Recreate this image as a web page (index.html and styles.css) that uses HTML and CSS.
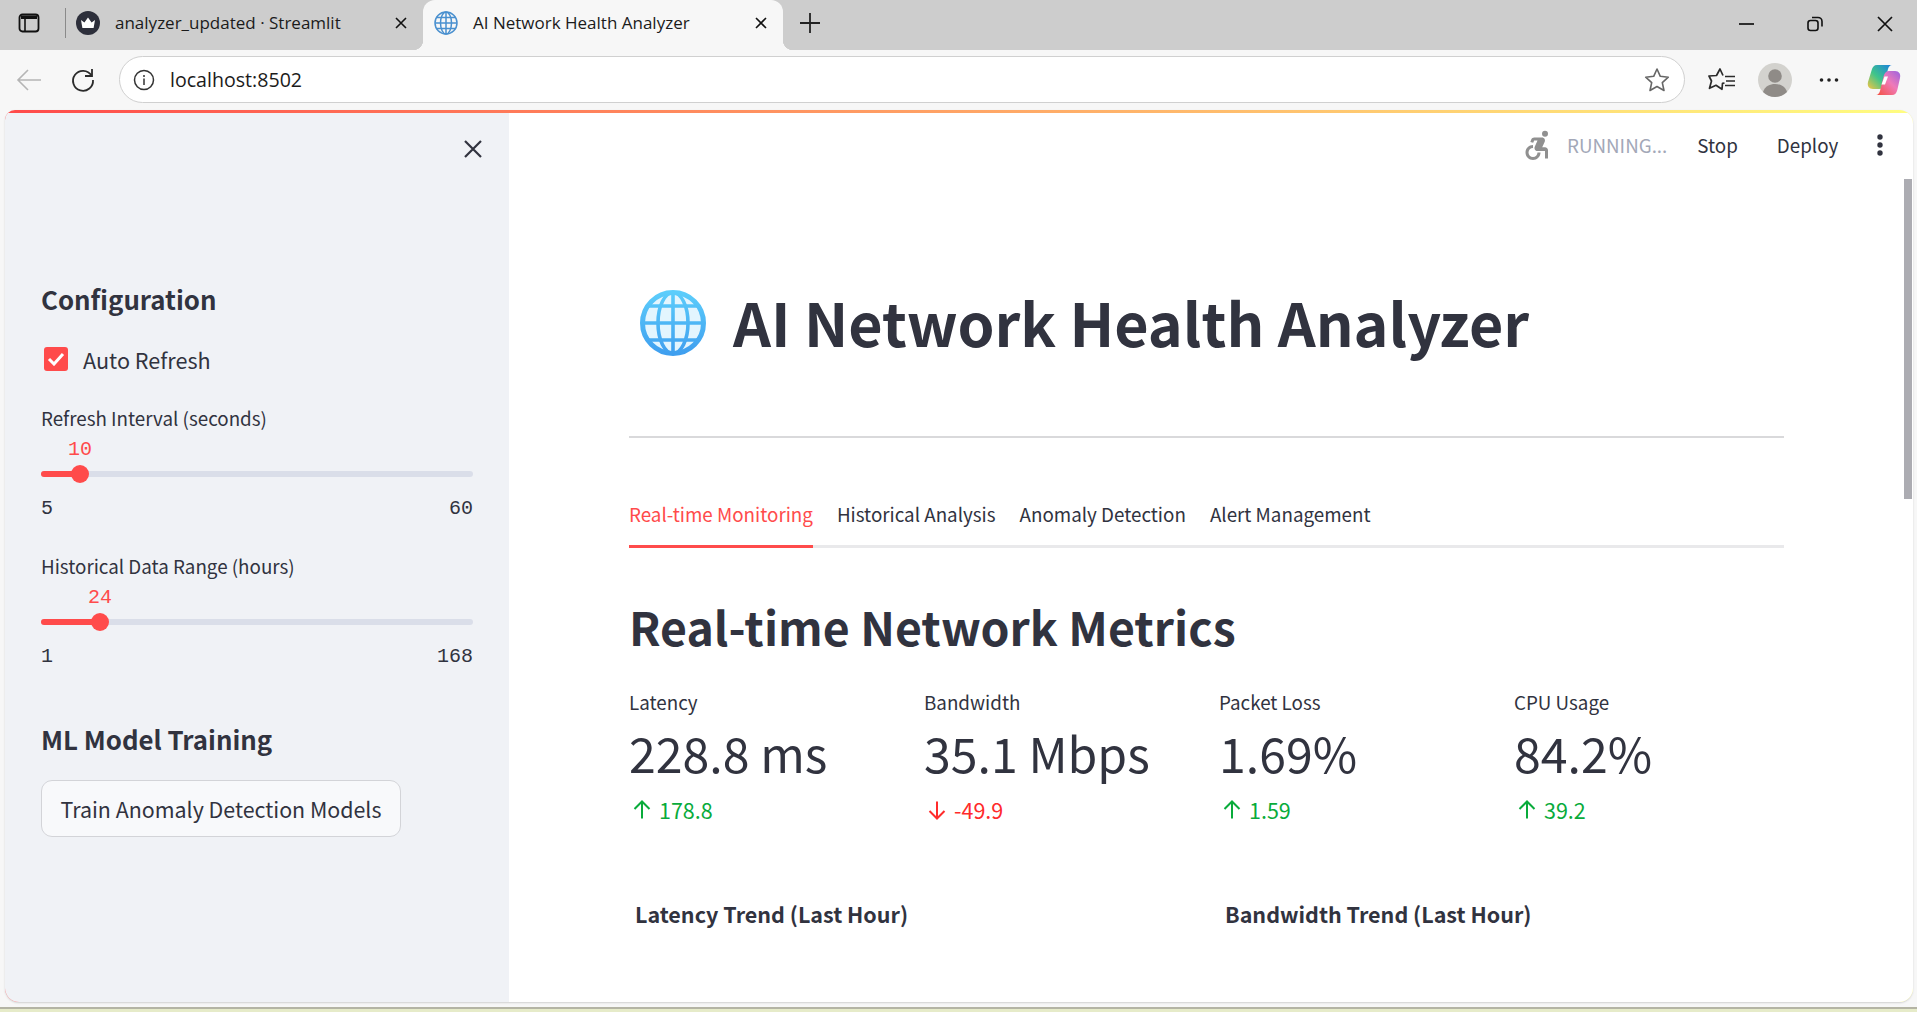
FILE: index.html
```html
<!DOCTYPE html>
<html>
<head>
    <meta charset="UTF-8">
    <title>AI Network Health Analyzer</title>
    <link rel="stylesheet" href="styles.css">
</head>
<body>
    <div class="tabbar">
        <svg class="tb-panel" width="22" height="22" viewBox="0 0 22 22"><rect x="1.5" y="2.5" width="19" height="17" rx="3" fill="none" stroke="#111" stroke-width="1.8"/><path d="M3 3.5h16V7H3z" fill="#111"/><path d="M7 7v12" stroke="#111" stroke-width="1.6"/></svg>
        <div class="tb-sep"></div>
        <div class="tab">
            <svg class="tab-icon" width="24" height="24" viewBox="0 0 24 24"><circle cx="12" cy="12" r="12" fill="#2d2f3b"/><path d="M5 9l3.4 2.6L12 6.5l3.6 5.1L19 9l-1.4 8H6.400z" fill="#fff"/></svg>
            <span class="tab-title">analyzer_updated · Streamlit</span>
            <svg class="tab-x" width="14" height="14" viewBox="0 0 14 14"><path d="M2 2l10 10M12 2L2 12" stroke="#111" stroke-width="1.6"/></svg>
        </div>
        <div class="tab tab-active">
            <svg class="tab-icon" width="24" height="24" viewBox="0 0 24 24" fill="none" stroke="#4a90cf" stroke-width="1.5"><circle cx="12" cy="12" r="11"/><ellipse cx="12" cy="12" rx="5.500" ry="11"/><path d="M12 1v22M1 12h22M2.500 6.500h19M2.500 17.500h19"/></svg>
            <span class="tab-title">AI Network Health Analyzer</span>
            <svg class="tab-x" width="14" height="14" viewBox="0 0 14 14"><path d="M2 2l10 10M12 2L2 12" stroke="#111" stroke-width="1.6"/></svg>
        </div>
        <svg class="tb-plus" width="22" height="22" viewBox="0 0 22 22"><path d="M11 1v20M1 11h20" stroke="#222" stroke-width="1.8"/></svg>
        <div class="win-btns">
            <svg width="16" height="16" viewBox="0 0 16 16"><path d="M0 8h15" stroke="#111" stroke-width="1.7"/></svg>
            <svg class="win-restore" width="16" height="16" viewBox="0 0 16 16" fill="none" stroke="#111" stroke-width="1.6"><rect x="1" y="4.500" width="10" height="10" rx="2.500"/><path d="M5 1.500h6a4 4 0 0 1 4 4v5"/></svg>
            <svg width="16" height="16" viewBox="0 0 16 16"><path d="M1 1l14 14M15 1L1 15" stroke="#111" stroke-width="1.7"/></svg>
        </div>
    </div>

    <div class="toolbar">
        <svg class="tl-back" width="26" height="24" viewBox="0 0 26 24" fill="none" stroke="#b5b5b5" stroke-width="1.6"><path d="M25 12H2M12 2L2 12l10 10"/></svg>
        <svg class="tl-reload" width="26" height="26" viewBox="0 0 26 26" fill="none" stroke="#2b2b2b" stroke-width="1.8"><path d="M21.500 8.500A10 10 0 1 0 23 13"/><path d="M22 2v7h-7"/></svg>
        <div class="addr">
            <svg width="22" height="22" viewBox="0 0 22 22" fill="none" stroke="#333" stroke-width="1.5"><circle cx="11" cy="11" r="9.500"/><path d="M11 9.500v6.500M11 6v2"/></svg>
            <span class="addr-text">localhost:8502</span>
            <svg class="addr-star" width="26" height="26" viewBox="0 0 26 26" fill="none" stroke="#666" stroke-width="1.6" stroke-linejoin="round"><path d="M13 2l3.300 7.300 8 .9-6 5.400 1.700 7.900-7-4-7 4 1.700-7.900-6-5.400 8-.9z"/></svg>
        </div>
        <svg class="tl-fav" width="28" height="26" viewBox="0 0 28 26" fill="none" stroke="#2b2b2b" stroke-width="1.7" stroke-linejoin="round"><path d="M16.500 16l-2 .3-.5 6-6-4-6.500 3 2-7.300L1 9l7.500-.5L12 2l3 6.500"/><path d="M17 9.500h10M18 14h9M17 18.500h10" stroke-width="1.500"/></svg>
        <svg class="tl-avatar" width="34" height="34" viewBox="0 0 34 34"><circle cx="17" cy="17" r="17" fill="#d3d2ce"/><circle cx="17" cy="13" r="6.800" fill="#8f8b87"/><path d="M5 29c2-6 7-8 12-8s10 2 12 8a17 17 0 0 1-24 0z" fill="#8f8b87"/></svg>
        <svg class="tl-dots" width="20" height="6" viewBox="0 0 20 6"><circle cx="2.500" cy="3" r="1.800" fill="#222"/><circle cx="10" cy="3" r="1.800" fill="#222"/><circle cx="17.500" cy="3" r="1.800" fill="#222"/></svg>
        <svg class="tl-copilot" width="34" height="32" viewBox="0 0 34 32">
            <defs>
                <linearGradient id="cpA" x1="0" y1="1" x2="1" y2="0"><stop offset="0" stop-color="#f5c542"/><stop offset=".45" stop-color="#3fc58a"/><stop offset="1" stop-color="#1a7fe0"/></linearGradient>
                <linearGradient id="cpB" x1="0" y1="1" x2="1" y2="0"><stop offset="0" stop-color="#f4503e"/><stop offset=".55" stop-color="#f07ab8"/><stop offset="1" stop-color="#9a63e0"/></linearGradient>
            </defs>
            <path d="M10 1C7 1 5.500 3 4.700 6L1 18c-1 4 1 7 5 7h6c3 0 4.500-2 5.300-5L21 5c.6-2 2-4 4-4z" fill="url(#cpA)"/>
            <path d="M25 31c3 0 4.500-2 5.300-5L33 14c1-4-1-7-5-7h-6c-3 0-4.500 2-5.300 5L13 27c-.6 2-2 4-4 4z" fill="url(#cpB)"/>
            <path d="M17.500 12.500h3.500l-3 8h-3.500z" fill="#fff"/>
        </svg>
    </div>

    <div class="window">
        <aside class="sidebar">
            <svg class="side-close" width="20" height="20" viewBox="0 0 20 20"><path d="M2 2l16 16M18 2L2 18" stroke="#31333f" stroke-width="2.200"/></svg>
            <h3 class="side-head side-head-first">Configuration</h3>
            <label class="check">
                <span class="check-box"><svg width="18" height="14" viewBox="0 0 18 14"><path d="M2 7l5 5 9-10" fill="none" stroke="#fff" stroke-width="3"/></svg></span>
                Auto Refresh
            </label>
            <div class="field">
                <div class="field-label">Refresh Interval (seconds)</div>
                <div class="slider"><div class="slider-fill" style="width:39px"><span class="slider-val">10</span><span class="slider-thumb"></span></div></div>
                <div class="ticks"><span>5</span><span>60</span></div>
            </div>
            <div class="field">
                <div class="field-label">Historical Data Range (hours)</div>
                <div class="slider"><div class="slider-fill" style="width:59px"><span class="slider-val">24</span><span class="slider-thumb"></span></div></div>
                <div class="ticks"><span>1</span><span>168</span></div>
            </div>
            <h3 class="side-head side-head-ml">ML Model Training</h3>
            <button class="btn">Train Anomaly Detection Models</button>
        </aside>

        <main class="main">
            <header class="st-header">
                <svg class="run-icon" width="36" height="36" viewBox="0 0 24 24" fill="#909090"><circle cx="18" cy="4.540" r="2"/><path d="M15 17h-2c0 1.650-1.350 3-3 3s-3-1.350-3-3 1.350-3 3-3v-2c-2.760 0-5 2.240-5 5s2.240 5 5 5 5-2.240 5-5zm3-3.500h-1.860l1.670-3.670C18.420 8.500 17.440 7 15.960 7h-5.200c-.81 0-1.540.47-1.870 1.200L8.220 10l1.920.53.65-1.530H13l-1.830 4.100c-.6 1.330.39 2.900 1.850 2.900H18v5h2v-5.500c0-1.100-.9-2-2-2z"/></svg>
                <span class="run-text">RUNNING...</span>
                <span class="hdr-btn hdr-stop">Stop</span>
                <span class="hdr-btn hdr-deploy">Deploy</span>
                <svg class="hdr-more" width="6" height="22" viewBox="0 0 6 22"><circle cx="3" cy="3" r="2.700" fill="#31333f"/><circle cx="3" cy="11" r="2.700" fill="#31333f"/><circle cx="3" cy="19" r="2.700" fill="#31333f"/></svg>
            </header>
            <div class="scroll-thumb"></div>

            <div class="content">
                <h1 class="title">
                    <svg class="title-globe" width="66" height="66" viewBox="0 0 66 66" fill="none">
                        <defs><linearGradient id="gl" x1="0" y1="0" x2="0" y2="1"><stop offset="0" stop-color="#5ccdfb"/><stop offset="1" stop-color="#3f9fef"/></linearGradient></defs>
                        <circle cx="33" cy="33" r="32" fill="#e3f5fe"/>
                        <g stroke="url(#gl)" stroke-width="3.600">
                            <ellipse cx="33" cy="33" rx="15" ry="30.500"/>
                            <path d="M33 2v62M2 33h62M8 16h50M8 50h50"/>
                        </g>
                        <circle cx="33" cy="33" r="30.500" stroke="url(#gl)" stroke-width="5"/>
                    </svg>
                    AI Network Health Analyzer
                </h1>
                <hr class="rule">
                <nav class="tabs">
                    <span class="st-tab st-tab-on">Real-time Monitoring</span>
                    <span class="st-tab">Historical Analysis</span>
                    <span class="st-tab">Anomaly Detection</span>
                    <span class="st-tab">Alert Management</span>
                </nav>
                <h2 class="section">Real-time Network Metrics</h2>
                <div class="metrics">
                    <div class="metric">
                        <div class="metric-label">Latency</div>
                        <div class="metric-value">228.8 ms</div>
                        <div class="delta delta-up"><svg width="24" height="24" viewBox="0 0 24 24"><path d="M12 20.500V3.500M4.500 11L12 3.500l7.500 7.500" fill="none" stroke="currentColor" stroke-width="2"/></svg>178.8</div>
                    </div>
                    <div class="metric">
                        <div class="metric-label">Bandwidth</div>
                        <div class="metric-value">35.1 Mbps</div>
                        <div class="delta delta-down"><svg width="24" height="24" viewBox="0 0 24 24"><path d="M12 3.500v17M4.500 13l7.500 7.500 7.500-7.500" fill="none" stroke="currentColor" stroke-width="2"/></svg>-49.9</div>
                    </div>
                    <div class="metric">
                        <div class="metric-label">Packet Loss</div>
                        <div class="metric-value">1.69%</div>
                        <div class="delta delta-up"><svg width="24" height="24" viewBox="0 0 24 24"><path d="M12 20.500V3.500M4.500 11L12 3.500l7.500 7.500" fill="none" stroke="currentColor" stroke-width="2"/></svg>1.59</div>
                    </div>
                    <div class="metric">
                        <div class="metric-label">CPU Usage</div>
                        <div class="metric-value">84.2%</div>
                        <div class="delta delta-up"><svg width="24" height="24" viewBox="0 0 24 24"><path d="M12 20.500V3.500M4.500 11L12 3.500l7.500 7.500" fill="none" stroke="currentColor" stroke-width="2"/></svg>39.2</div>
                    </div>
                </div>
                <div class="trends">
                    <div class="trend">Latency Trend (Last Hour)</div>
                    <div class="trend">Bandwidth Trend (Last Hour)</div>
                </div>
            </div>
        </main>
    </div>
    <div class="taskbar-edge"></div>
</body>
</html>
```

FILE: styles.css
```css
* {
    box-sizing: border-box;
    margin: 0;
    padding: 0;
}

html,
body {
    height: 100%;
    overflow: hidden;
}

body {
    display: flex;
    flex-direction: column;
    background-color: #f7f7f7;
    color: #31333f;
    font-family: "Noto Sans CJK SC", "Noto Sans", sans-serif;
}

/* browser tab strip */
.tabbar {
    display: flex;
    align-items: center;
    flex: none;
    position: relative;
    height: 50px;
    background-color: #cdcdcd;
    font-family: "Open Sans", "Noto Sans", sans-serif;
    font-size: 17px;
    color: #1b1b1b;
}

.tb-panel {
    margin-left: 18px;
    margin-bottom: 5px;
}

.tb-sep {
    width: 1px;
    height: 30px;
    margin-left: 25px;
    margin-bottom: 5px;
    background-color: #8a8a8a;
}

.tab {
    display: flex;
    align-items: center;
    width: 357px;
    height: 50px;
    padding-left: 10px;
    padding-right: 15px;
    padding-bottom: 5px;
}

.tab-active {
    position: relative;
    width: 360px;
    padding-left: 11px;
    background-color: #f7f7f7;
    border-radius: 12px 12px 0 0;
}

/* flared foot of the active tab */
.tab-active::before,
.tab-active::after {
    content: "";
    position: absolute;
    bottom: 0;
    width: 10px;
    height: 10px;
}

.tab-active::before {
    left: -10px;
    background: radial-gradient(circle at 0 0, #cdcdcd 10px, #f7f7f7 10.500px);
}

.tab-active::after {
    right: -10px;
    background: radial-gradient(circle at 100% 0, #cdcdcd 10px, #f7f7f7 10.500px);
}

.tab-icon {
    flex: none;
}

.tab-title {
    flex: 1;
    margin-left: 15px;
    white-space: nowrap;
}

.tb-plus {
    margin-left: 16px;
    margin-bottom: 5px;
}

.win-btns {
    display: flex;
    align-items: center;
    gap: 53px;
    margin-left: auto;
    margin-right: 24px;
    margin-bottom: 3px;
}

.win-restore {
    margin-left: -1px;
    margin-right: 1px;
}

/* address bar row */
.toolbar {
    display: flex;
    align-items: center;
    flex: none;
    height: 60px;
    padding-bottom: 1px;
    background-color: #f7f7f7;
}

.tl-back {
    margin-left: 16px;
}

.tl-reload {
    margin-left: 28px;
}

.addr {
    display: flex;
    align-items: center;
    width: 1566px;
    height: 47px;
    margin-left: 23px;
    padding: 0 14px 0 13px;
    background-color: #fff;
    border: 1.5px solid #d0d0d0;
    border-radius: 24px;
}

.addr-text {
    flex: 1;
    margin-left: 15px;
    font-family: "Open Sans", "Noto Sans", sans-serif;
    font-size: 19.600px;
    color: #1b1b1b;
}

.tl-fav {
    margin-left: 23px;
}

.tl-avatar {
    margin-left: 22px;
}

.tl-dots {
    margin-left: 27px;
}

.tl-copilot {
    margin-left: 28px;
}

/* page area */
.window {
    display: flex;
    flex: 1;
    min-height: 0;
    margin: 0 4px 5px 5px;
    padding-top: 3px;
    background: linear-gradient(90deg, #ff4b4b, #fffd80);
    border-radius: 10px 14px 14px 14px;
    box-shadow: 0 1px 2px #d0d0d0;
    overflow: hidden;
}

.taskbar-edge {
    flex: none;
    height: 5px;
    background: linear-gradient(#b4b4a4 0, #b4b4a4 2px, #e6ebc9 2px);
}

.sidebar {
    position: relative;
    flex: none;
    width: 504px;
    padding: 0 36px;
    background-color: #f0f2f6;
}

.side-close {
    position: absolute;
    top: 26px;
    left: 458px;
}

.side-head {
    font-size: 25.800px;
    font-weight: 600;
    line-height: 38px;
}

.side-head-first {
    margin-top: 167px;
}

.side-head-ml {
    margin-top: 51px;
}

.check {
    display: flex;
    align-items: center;
    gap: 15px;
    height: 30px;
    margin-top: 26px;
    margin-left: 3px;
    font-size: 21.600px;
}

.check-box {
    display: flex;
    align-items: center;
    justify-content: center;
    width: 24px;
    height: 24px;
    background-color: #ff4b4b;
    border-radius: 3px;
}

.field {
    margin-top: 32px;
}

.check + .field {
    margin-top: 31px;
}

.field-label {
    font-size: 18.800px;
    line-height: 26px;
}

.slider {
    position: relative;
    height: 6px;
    margin-top: 40px;
    background-color: #dadee9;
    border-radius: 3px;
}

.slider-fill {
    position: relative;
    height: 6px;
    background-color: #ff4b4b;
    border-radius: 3px;
}

.slider-thumb {
    position: absolute;
    top: -6px;
    right: -9px;
    width: 18px;
    height: 18px;
    background-color: #ff4b4b;
    border-radius: 50%;
}

.slider-val {
    position: absolute;
    top: -33px;
    right: -20px;
    width: 40px;
    font-family: "Liberation Mono", monospace;
    font-size: 20px;
    line-height: 24px;
    text-align: center;
    color: #ff4b4b;
}

.ticks {
    display: flex;
    justify-content: space-between;
    margin-top: 20px;
    font-family: "Liberation Mono", monospace;
    font-size: 20px;
    line-height: 24px;
}

.btn {
    display: block;
    width: 360px;
    height: 57px;
    margin-top: 22px;
    background-color: #f8f9fb;
    border: 1.5px solid #d3d4d8;
    border-radius: 11px;
    color: #31333f;
    font-family: inherit;
    font-size: 21.400px;
}

.main {
    position: relative;
    flex: 1;
    min-width: 0;
    background-color: #fff;
}

.st-header {
    display: flex;
    align-items: center;
    height: 63px;
}

.run-icon {
    margin-left: 1009px;
}

.run-text {
    margin-left: 13px;
    font-size: 18.800px;
    color: #a3a8b8;
}

.hdr-btn {
    font-size: 18.800px;
}

.hdr-stop {
    margin-left: 30px;
}

.hdr-deploy {
    margin-left: 39px;
}

.hdr-more {
    margin-left: 39px;
}

.scroll-thumb {
    position: absolute;
    top: 66px;
    right: 1px;
    width: 8px;
    height: 320px;
    background-color: #acacb2;
}

.content {
    width: 1395px;
    padding: 0 120px;
}

.title {
    display: flex;
    align-items: center;
    height: 86px;
    margin-top: 102px;
    padding-left: 11px;
    font-size: 59.200px;
    font-weight: 700;
    line-height: 86px;
    white-space: nowrap;
}

.title-globe {
    flex: none;
    margin-top: 4px;
    margin-right: 27px;
}

.rule {
    height: 2px;
    margin-top: 72px;
    background-color: #d9d9db;
    border: 0;
}

.tabs {
    display: flex;
    gap: 24px;
    height: 61px;
    margin-top: 49px;
    border-bottom: 3px solid #e9e9eb;
    font-size: 18.800px;
    line-height: 54px;
}

.st-tab {
    height: 61px;
}

.st-tab-on {
    color: #ff4b4b;
    border-bottom: 3px solid #ff4b4b;
}

.section {
    margin-top: 44px;
    font-size: 46.400px;
    font-weight: 600;
    line-height: 68px;
    white-space: nowrap;
}

.metrics {
    display: grid;
    grid-template-columns: repeat(4, 295px);
    margin-top: 28px;
}

.metric-label {
    font-size: 18.800px;
    line-height: 28px;
}

.metric-value {
    margin-top: 2px;
    font-size: 48.200px;
    line-height: 68px;
    white-space: nowrap;
}

.delta {
    display: flex;
    align-items: center;
    gap: 5px;
    margin-top: 10px;
    padding-left: 1px;
    font-size: 21.500px;
    line-height: 28px;
}

.delta-up {
    color: #09ab3b;
}

.delta-down {
    color: #ff2b2b;
}

.trends {
    display: grid;
    grid-template-columns: 590px 1fr;
    margin-top: 75px;
    padding-left: 6px;
}

.trend {
    font-size: 21.500px;
    font-weight: 700;
    line-height: 30px;
}
```
